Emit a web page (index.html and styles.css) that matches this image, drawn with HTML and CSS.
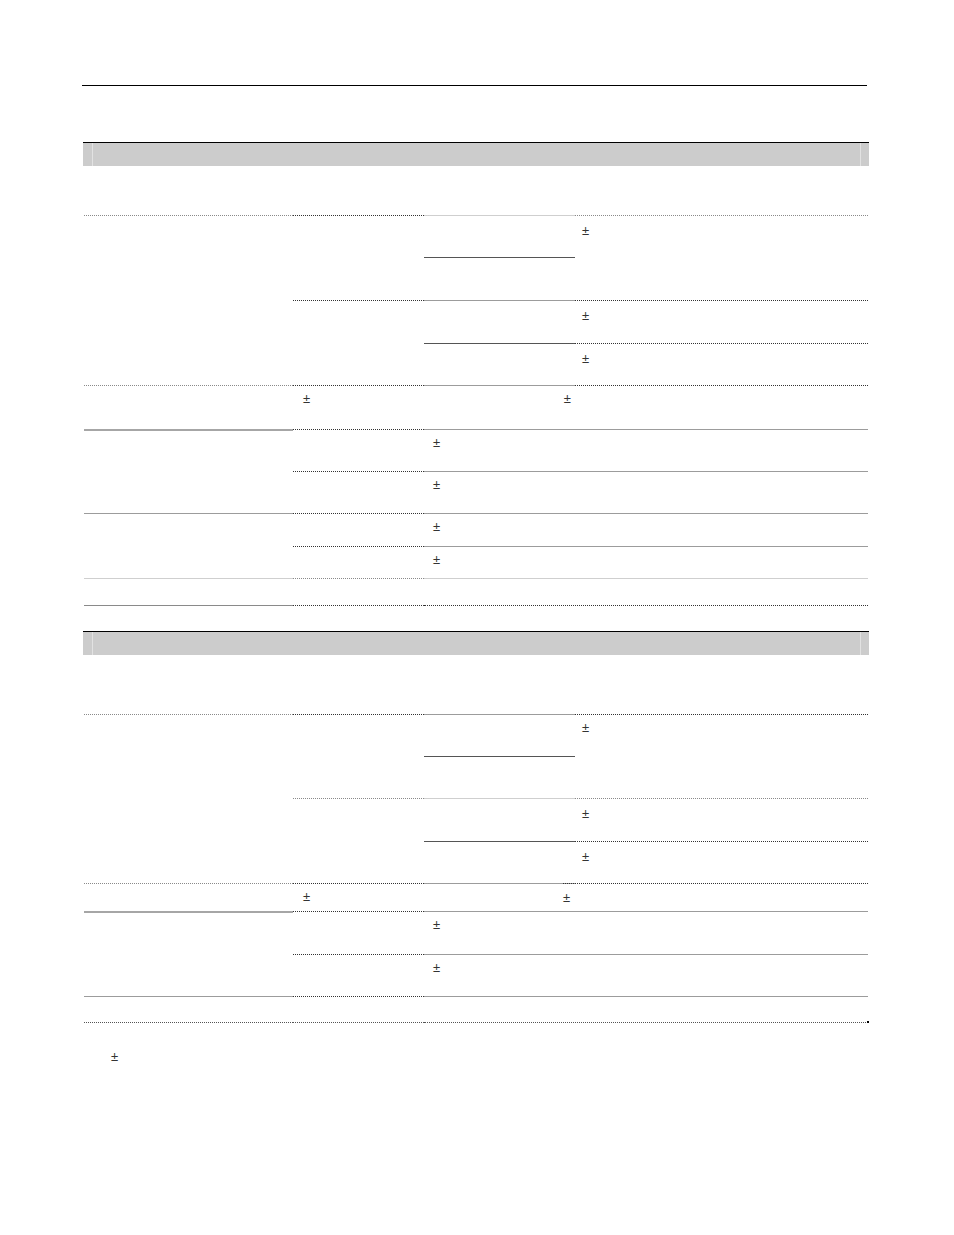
FILE: index.html
```html
<!DOCTYPE html>
<html>
<head>
<meta charset="utf-8">
<link rel="stylesheet" href="styles.css">
</head>
<body>
<div class="page">
  <div class="top-rule"></div>

  <section class="sec sec1">
    <div class="band"><div class="band-inner"></div></div>
    <div class="grid g1">
      <div class="c hdr"></div>

      <div class="c r4 t-dl"></div>
      <div class="c r2 t-d"></div>
      <div class="c t-sl"></div>
      <div class="c r2 t-dl"><span class="pm p4">±</span></div>
      <div class="c t-sd"></div>
      <div class="c r2 t-d"></div>
      <div class="c t-s"></div>
      <div class="c t-d"><span class="pm p4">±</span></div>
      <div class="c t-sd"></div>
      <div class="c t-d"><span class="pm p4">±</span></div>

      <div class="c t-dl"></div>
      <div class="c t-d"><span class="pm p2">±</span></div>
      <div class="c t-s right"><span class="pm p3r">±</span></div>
      <div class="c t-d"></div>

      <div class="c r2 t-s2"></div>
      <div class="c t-d"></div>
      <div class="c w2 t-s"><span class="pm p3">±</span></div>
      <div class="c t-d"></div>
      <div class="c w2 t-s"><span class="pm p3">±</span></div>

      <div class="c r2 t-s"></div>
      <div class="c t-d"></div>
      <div class="c w2 t-s"><span class="pm p3 up">±</span></div>
      <div class="c t-d"></div>
      <div class="c w2 t-s"><span class="pm p3 up">±</span></div>

      <div class="c t-sl b-s"></div>
      <div class="c t-dl b-d"></div>
      <div class="c w2 t-sl b-d"></div>
    </div>
  </section>

  <section class="sec sec2">
    <div class="band"><div class="band-inner"></div></div>
    <div class="grid g2">
      <div class="c hdr"></div>

      <div class="c r4 t-dl"></div>
      <div class="c r2 t-d"></div>
      <div class="c t-s"></div>
      <div class="c r2 t-d"><span class="pm p4 up">±</span></div>
      <div class="c t-sd"></div>
      <div class="c r2 t-dl"></div>
      <div class="c t-sl"></div>
      <div class="c t-dl"><span class="pm p4">±</span></div>
      <div class="c t-sd"></div>
      <div class="c t-d"><span class="pm p4">±</span></div>

      <div class="c t-dl"></div>
      <div class="c t-d"><span class="pm p2">±</span></div>
      <div class="c t-s"></div>
      <div class="c t-d right"><span class="pm p4b">±</span></div>

      <div class="c r2 t-s2"></div>
      <div class="c t-d"></div>
      <div class="c w2 t-s"><span class="pm p3">±</span></div>
      <div class="c t-d"></div>
      <div class="c w2 t-s"><span class="pm p3">±</span></div>

      <div class="c t-s b-dl"></div>
      <div class="c t-d b-dl"></div>
      <div class="c w2 t-s b-dl end"></div>
    </div>
  </section>

  <p class="note"><span class="pm">±</span></p>
</div>
</body>
</html>
```

FILE: styles.css
```css
html, body {
  margin: 0;
  padding: 0;
  background: #ffffff;
}

body {
  font-family: "Liberation Sans", Arial, sans-serif;
  font-size: 13px;
  color: #222;
}

.page {
  width: 954px;
  height: 1235px;
  box-sizing: border-box;
  padding-top: 85px;
  overflow: hidden;
}

.top-rule {
  margin: 0 0 0 82px;
  width: 785px;
  height: 0;
  border-top: 1px solid #000;
}

.sec1 {
  margin-top: 56px;
}

.sec2 {
  margin-top: 25px;
}

.band {
  margin-left: 83px;
  width: 786px;
  border-top: 1px solid #000;
  background: #cccccc;
  box-sizing: border-box;
  height: 24px;
  padding: 0 8px 0 9px;
}

.band-inner {
  height: 100%;
  border-left: 1px solid #e2e2e2;
  border-right: 1px solid #e2e2e2;
}

.grid {
  display: grid;
  margin-left: 84px;
  width: 784px;
  grid-template-columns: 209px 131px 151px 293px;
}

.g1 {
  grid-template-rows: 49px 42px 43px 43px 42px 44px 42px 42px 33px 32px 28px;
}

.g2 {
  grid-template-rows: 59px 42px 42px 43px 42px 28px 43px 42px 27px;
}

.c {
  box-sizing: border-box;
  min-height: 0;
}

.hdr {
  grid-column: 1 / span 4;
}

.r2 { grid-row: span 2; }
.r4 { grid-row: span 4; }
.w2 { grid-column: span 2; }

.t-d  { border-top: 1px dotted #333; }
.t-dl { border-top: 1px dotted #8a8a8a; }
.t-s  { border-top: 1px solid #9c9c9c; }
.t-s2 { border-top: 2px solid #a6a6a6; }
.t-sl { border-top: 1px solid #cfcfcf; }
.t-sd { border-top: 1px solid #555; }

.b-s  { border-bottom: 1px solid #8a8a8a; }
.b-d  { border-bottom: 1px dotted #333; }
.b-dl { border-bottom: 1px dotted #555; }

.end {
  position: relative;
}

.end::after {
  content: "";
  position: absolute;
  right: -1px;
  bottom: -1px;
  width: 2px;
  height: 2px;
  background: #000;
}

.pm {
  display: inline-block;
  font-size: 13px;
  line-height: 15px;
  color: #333;
}

.p4 { padding: 7px 0 0 7px; }
.p4b { padding: 6px 0 0 0; }
.p2 { padding: 5px 0 0 10px; }
.p3 { padding: 5px 0 0 9px; }
.p3r { padding: 5px 4px 0 0; }
.up { padding-top: 5px; }

.right {
  text-align: right;
}

.g2 .right {
  text-align: left;
  margin-left: -12px;
}

.note {
  margin: 26px 0 0 111px;
  line-height: 15px;
}
```
